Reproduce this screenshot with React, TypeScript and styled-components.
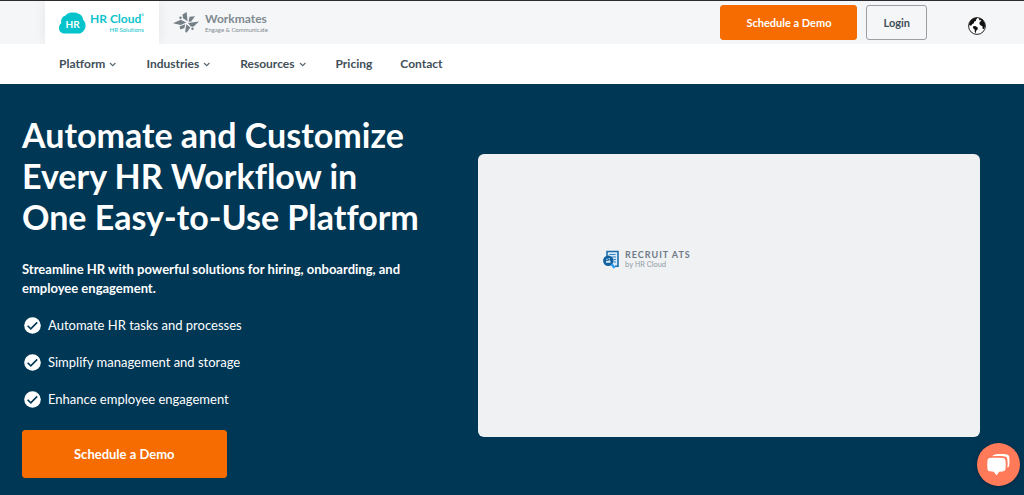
import React from "react";
import styled, { createGlobalStyle } from "styled-components";

const GlobalStyle = createGlobalStyle`
  *, *::before, *::after { box-sizing: border-box; }
  body {
    margin: 0;
    background: #003755;
    font-family: Lato, "Liberation Sans", sans-serif;
    font-variant-ligatures: none;
    color: #414f59;
  }
  h1, p, ul { margin: 0; padding: 0; }
  ul { list-style: none; }
  a { color: inherit; text-decoration: none; }
  button { font-family: inherit; cursor: pointer; }
`;

const TopBar = styled.header`
  display: flex;
  align-items: stretch;
  min-height: 44px;
  padding: 0 38px 0 45px;
  background: #f5f6f8;
  border-top: 1px solid #2d2b30;
`;

const BrandTab = styled.a<{ $active?: boolean }>`
  display: flex;
  align-items: center;
  gap: ${(p) => (p.$active ? 4 : 6)}px;
  min-width: 114px;
  padding: 0 14px;
  color: ${(p) => (p.$active ? "#0cc4cc" : "#7f8a90")};
  background: ${(p) => (p.$active ? "#fff" : "transparent")};
  box-shadow: ${(p) => (p.$active ? "0 0 12px rgba(0, 0, 0, 0.07)" : "none")};
  clip-path: inset(0 -16px 0 -16px);
`;

const BrandText = styled.span<{ $end?: boolean }>`
  display: flex;
  flex-direction: column;
  align-items: ${(p) => (p.$end ? "flex-end" : "flex-start")};
`;

const BrandName = styled.span`
  font-size: 12px;
  line-height: 14px;
  font-weight: 700;
`;

const Mark = styled.span`
  font-size: 6px;
  vertical-align: top;
  line-height: 8px;
`;

const BrandTagline = styled.span`
  font-size: 6px;
  line-height: 8px;
  font-weight: 400;
`;

const Actions = styled.div`
  display: flex;
  align-items: flex-start;
  gap: 9px;
  margin-left: auto;
  padding-top: 4px;
`;

const Button = styled.button<{ $kind: "solid" | "outline"; $large?: boolean }>`
  height: ${(p) => (p.$large ? 48 : 35)}px;
  padding: 0 ${(p) => (p.$large ? 51 : p.$kind === "solid" ? 25 : 16)}px;
  border: 1px solid ${(p) => (p.$kind === "solid" ? "#f66c00" : "#9b9fa3")};
  border-radius: 3px;
  background: ${(p) => (p.$kind === "solid" ? "#f66c00" : "transparent")};
  color: ${(p) => (p.$kind === "solid" ? "#fff" : "#414f59")};
  font-size: ${(p) => (p.$large ? 13 : 11)}px;
  font-weight: 700;
`;

const LanguageButton = styled.button`
  display: flex;
  margin: 12px 0 0 32px;
  padding: 0;
  border: 0;
  background: none;
`;

const Nav = styled.nav`
  display: flex;
  align-items: center;
  gap: 28px;
  min-height: 40px;
  padding: 0 59px;
  background: #fff;
`;

const NavLink = styled.a`
  display: flex;
  align-items: center;
  gap: 4px;
  font-size: 12px;
  line-height: 16px;
  font-weight: 700;
`;

const Hero = styled.main`
  display: grid;
  grid-template-columns: minmax(0, 456fr) minmax(0, 502fr);
  padding: 30px 44px 17px 22px;
  background: #003755;
  color: #fff;
`;

const Title = styled.h1`
  font-size: 34px;
  line-height: 41px;
  font-weight: 700;
`;

const Lead = styled.p`
  max-width: 400px;
  margin-top: 23px;
  font-size: 13px;
  line-height: 19px;
  font-weight: 700;
`;

const Benefits = styled.ul`
  display: grid;
  gap: 17px;
  margin: 17px 0 21px;
`;

const Benefit = styled.li`
  display: flex;
  align-items: center;
  gap: 7px;
  padding-left: 2px;
  font-size: 13px;
  line-height: 20px;
`;

const Preview = styled.section`
  align-self: start;
  min-height: 283px;
  margin-top: 40px;
  padding: 95px 125px;
  border-radius: 6px;
  background: #eff1f3;
`;

const Product = styled.div`
  display: flex;
  align-items: center;
  gap: 5px;
  color: #6e7a87;
`;

const ProductName = styled.div`
  font-size: 9px;
  line-height: 11px;
  font-weight: 700;
  letter-spacing: 1px;
`;

const ProductOwner = styled.div`
  font-family: Inter, "Liberation Sans", sans-serif;
  font-size: 7px;
  line-height: 9px;
  color: #8e98a2;
`;

const ChatButton = styled.button`
  position: fixed;
  right: 4px;
  bottom: 9px;
  display: flex;
  align-items: center;
  justify-content: center;
  width: 43px;
  height: 43px;
  padding: 0;
  border: 0;
  border-radius: 50%;
  background: #ff7a59;
  box-shadow: 0 1px 4px rgba(0, 0, 0, 0.3);
`;

const CloudLogo = () => (
  <svg width="27" height="22" viewBox="0 0 27 22" aria-hidden="true">
    <path d="M5.500 21.500C2 21.500 0 19 0 16c0-2 .8-3.700 2.200-4.800C1.700 7.500 3.400 4.600 6.500 3.600 8.500 1 11.500 0 14.500.7c1.500-.5 3.200-.2 4.300.8 3.200.7 5.200 3 5.300 6.200 1.600 1.500 2.500 3.300 2.500 5.500 0 4.500-3 8.300-7.500 8.300z" fill="#05c3cb" />
    <text x="13.500" y="16" textAnchor="middle" fontFamily="Lato, sans-serif" fontWeight="700" fontSize="10" fill="#fff">HR</text>
  </svg>
);

const WorkmatesLogo = () => (
  <svg width="26" height="21" viewBox="0 0 26 21" fill="#747f86" aria-hidden="true">
    <path d="M9.500 2.500 13.600 0l1 9.300L10 6.200zM0 11.300l7.800-3.500 5.400 2.800-5.400 2.400zM16.500 4.800l5.500-.6-3.800 5.200-2.600.3zM15 11l11-1.400-5.600 5.200-2.700-.2zM13.300 12.200l4 3.300-3.700 5.300-1.400-1.300zM6.500 14.500l5.700-2.300-.8 3.900-4 1.500z" />
    <circle cx="7.500" cy="5.800" r="1.200" />
    <circle cx="19.500" cy="16.800" r="1.200" />
  </svg>
);

const Chevron = () => (
  <svg width="9" height="5" viewBox="0 0 9 5" fill="none" stroke="#5b6770" strokeWidth="1.200" aria-hidden="true">
    <path d="m1 1 2.700 2.600L6.400 1" />
  </svg>
);

const Globe = () => (
  <svg width="18" height="18" viewBox="0 0 18 18" aria-hidden="true">
    <circle cx="9" cy="9" r="8.400" fill="#fff" stroke="#222" strokeWidth="1" />
    <path d="M1.200 7C2 3.500 5 .8 8.500.7l.6 1.100-1.400.9.400 1.300-1.800.6-.5 1.600-1.700 1-.9 1.500L1 8zM5.200 9.200l2-.2 2.600 1.600-.2 1.800-1.300 1.200-.6 2.600-.9-1.200-.2-2.600L4.900 11zM11.200 1.100l3.300 1.400 2.300 3.700.2 3.200-1.300 2.800-1-.5-.4-2.700-1.600-.5-1.300-1.500.3-2.200 1.800-.9-1.100-.9-1.200.2z" fill="#111" />
  </svg>
);

const Check = () => (
  <svg width="17" height="17" viewBox="0 0 17 17" aria-hidden="true">
    <circle cx="8.500" cy="8.500" r="8.300" fill="#fff" />
    <path d="m3.600 8.800 3.200 3.100 6.400-6.500" fill="none" stroke="#003755" strokeWidth="1.600" />
  </svg>
);

const RecruitLogo = () => (
  <svg width="17" height="19" viewBox="0 0 17 19" aria-hidden="true">
    <path d="M3.500 1h11.800v15.500H9" fill="#d9ebf8" />
    <path d="M4 6V1.500h11v14.700h-3" fill="none" stroke="#1c6fae" strokeWidth="1.600" />
    <path d="M6.500 4.500h6M8.500 7h4.500M10.500 9.500h2.500M10.500 12h2.500" stroke="#2f83c2" />
    <circle cx="5.300" cy="10.700" r="5.200" fill="#12609e" />
    <path d="m8.500 14 3 4" stroke="#2a9df0" strokeWidth="2.400" />
    <path d="M3 12.800v-1.600l1-.8 1 .8 1-1.200 1.500 1v1.800z" fill="#d9ebf8" />
    <circle cx="4" cy="9.200" r=".7" fill="#d9ebf8" />
    <circle cx="6.200" cy="8.700" r=".7" fill="#d9ebf8" />
  </svg>
);

const ChatIcon = () => (
  <svg width="23" height="22" viewBox="0 0 23 22" fill="#fff" aria-hidden="true">
    <path d="M5.500 2.200C6 .9 6.800.5 8 .4 12-.1 16-.1 19.800.4c1.500.2 2.200 1 2.400 2.400.4 3 .4 6 0 8.800-.2 1.200-.8 1.800-1.900 2.100.4-3 .4-6.200-.1-9-.2-1.300-1-2-2.300-2.200-4-.5-8.200-.6-12.400-.3z" />
    <path d="M2.700 4c4.300-.5 9-.5 13.300 0 1.500.2 2.300 1 2.500 2.400.4 2.900.4 5.900 0 8.700-.2 1.400-1 2-2.500 2.300l-3.800.3-2.700 3.700-2.700-3.700-4.100-.4C1.300 17.100.7 16.400.5 15.200.1 12.300.1 9.300.5 6.300.7 4.900 1.300 4.200 2.700 4z" />
  </svg>
);

const navItems = [
  { label: "Platform", menu: true },
  { label: "Industries", menu: true },
  { label: "Resources", menu: true },
  { label: "Pricing", menu: false },
  { label: "Contact", menu: false },
];

const benefits = [
  "Automate HR tasks and processes",
  "Simplify management and storage",
  "Enhance employee engagement",
];

export default function App() {
  return (
    <>
      <GlobalStyle />
      <TopBar>
        <BrandTab href="#" $active>
          <CloudLogo />
          <BrandText $end>
            <BrandName>
              HR Cloud<Mark>°</Mark>
            </BrandName>
            <BrandTagline>HR Solutions</BrandTagline>
          </BrandText>
        </BrandTab>
        <BrandTab href="#workmates">
          <WorkmatesLogo />
          <BrandText>
            <BrandName>Workmates</BrandName>
            <BrandTagline>Engage &amp; Communicate</BrandTagline>
          </BrandText>
        </BrandTab>
        <Actions>
          <Button $kind="solid">Schedule a Demo</Button>
          <Button $kind="outline">Login</Button>
          <LanguageButton aria-label="Language">
            <Globe />
          </LanguageButton>
        </Actions>
      </TopBar>
      <Nav>
        {navItems.map((item) => (
          <NavLink key={item.label} href={`#${item.label.toLowerCase()}`}>
            {item.label}
            {item.menu && <Chevron />}
          </NavLink>
        ))}
      </Nav>
      <Hero>
        <div>
          <Title>
            Automate and Customize
            <br />
            Every HR Workflow in
            <br />
            One Easy-to-Use Platform
          </Title>
          <Lead>Streamline HR with powerful solutions for hiring, onboarding, and employee engagement.</Lead>
          <Benefits>
            {benefits.map((text) => (
              <Benefit key={text}>
                <Check />
                {text}
              </Benefit>
            ))}
          </Benefits>
          <Button $kind="solid" $large>
            Schedule a Demo
          </Button>
        </div>
        <Preview>
          <Product>
            <RecruitLogo />
            <div>
              <ProductName>RECRUIT ATS</ProductName>
              <ProductOwner>by HR Cloud</ProductOwner>
            </div>
          </Product>
        </Preview>
      </Hero>
      <ChatButton aria-label="Open chat">
        <ChatIcon />
      </ChatButton>
    </>
  );
}
